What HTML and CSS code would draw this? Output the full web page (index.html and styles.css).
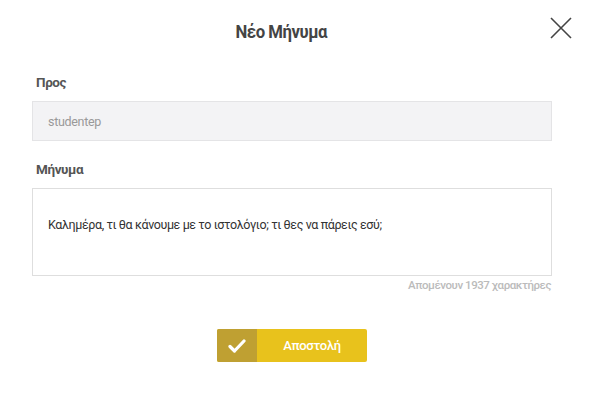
FILE: index.html
```html
<!DOCTYPE html>
<html lang="el">
<head>
<meta charset="utf-8">
<link rel="stylesheet" href="styles.css">
</head>
<body>
<div class="modal">
  <header class="head">
    <h1 class="title">Νέο Μήνυμα</h1>
    <button class="close" aria-label="close">
      <svg width="22" height="22" viewBox="0 0 22 22"><path d="M1 1L21 21M21 1L1 21" stroke="#444" stroke-width="1.6" fill="none"/></svg>
    </button>
  </header>
  <div class="field">
    <label class="label">Προς</label>
    <div class="input">studentep</div>
  </div>
  <div class="field field-msg">
    <label class="label">Μήνυμα</label>
    <div class="textarea">Καλημέρα, τι θα κάνουμε με το ιστολόγιο; τι θες να πάρεις εσύ;</div>
    <div class="counter">Απομένουν 1937 χαρακτήρες</div>
  </div>
  <div class="actions">
    <button class="send">
      <span class="send-icon"><svg width="18" height="14" viewBox="0 0 18 14"><path d="M2 7.5L6.5 12L16 2" stroke="#fff" stroke-width="3.2" fill="none" stroke-linecap="round" stroke-linejoin="round"/></svg></span>
      <span class="send-text">Αποστολή</span>
    </button>
  </div>
</div>
</body>
</html>
```
FILE: styles.css
```css
* { box-sizing: border-box; }
html, body { margin: 0; padding: 0; background: #fff; }
body { font-family: Roboto, "Noto Sans", sans-serif; color: #444; }
.modal { width: 597px; height: 394px; padding: 0 45px 0 32px; }
.head { position: relative; height: 62px; display: flex; align-items: center; justify-content: center; padding-right: 22px; }
.title { margin: 0; font-size: 18px; font-weight: 700; color: #444; letter-spacing: -0.5px; transform: scaleX(0.93); }
.close { position: absolute; right: -20px; top: 17px; background: none; border: 0; padding: 0; width: 22px; height: 22px; }
.field { display: flex; flex-direction: column; }
.label { font-size: 13.5px; font-weight: 700; color: #555; padding-left: 4px; height: 39px; display: flex; align-items: center; letter-spacing: -0.4px; margin-top: 0; }
.input { height: 40px; background: #f3f3f5; border: 1px solid #e4e4e6; padding-left: 15px; display: flex; align-items: center; font-size: 12.5px; color: #999; letter-spacing: -0.3px; }
.field-msg { margin-top: 8px; }
.textarea { height: 88px; border: 1px solid #dedede; padding: 28px 0 0 15px; font-size: 12.5px; line-height: 16px; color: #333; letter-spacing: -0.4px; }
.counter { text-align: right; font-size: 11.5px; font-weight: 500; color: #bbb; margin-top: 2px; padding-right: 1px; letter-spacing: -0.45px; }
.actions { display: flex; justify-content: center; margin-top: 37px; }
.send { display: flex; height: 33px; width: 150px; border: 0; padding: 0; border-radius: 2px; overflow: hidden; background: #e8c21c; font-family: inherit; }
.send-icon { width: 40px; background: #bfa032; display: flex; align-items: center; justify-content: center; }
.send-text { flex: 1; display: flex; align-items: center; justify-content: center; color: #fff; font-size: 13px; font-weight: 500; letter-spacing: -0.3px; }
```
